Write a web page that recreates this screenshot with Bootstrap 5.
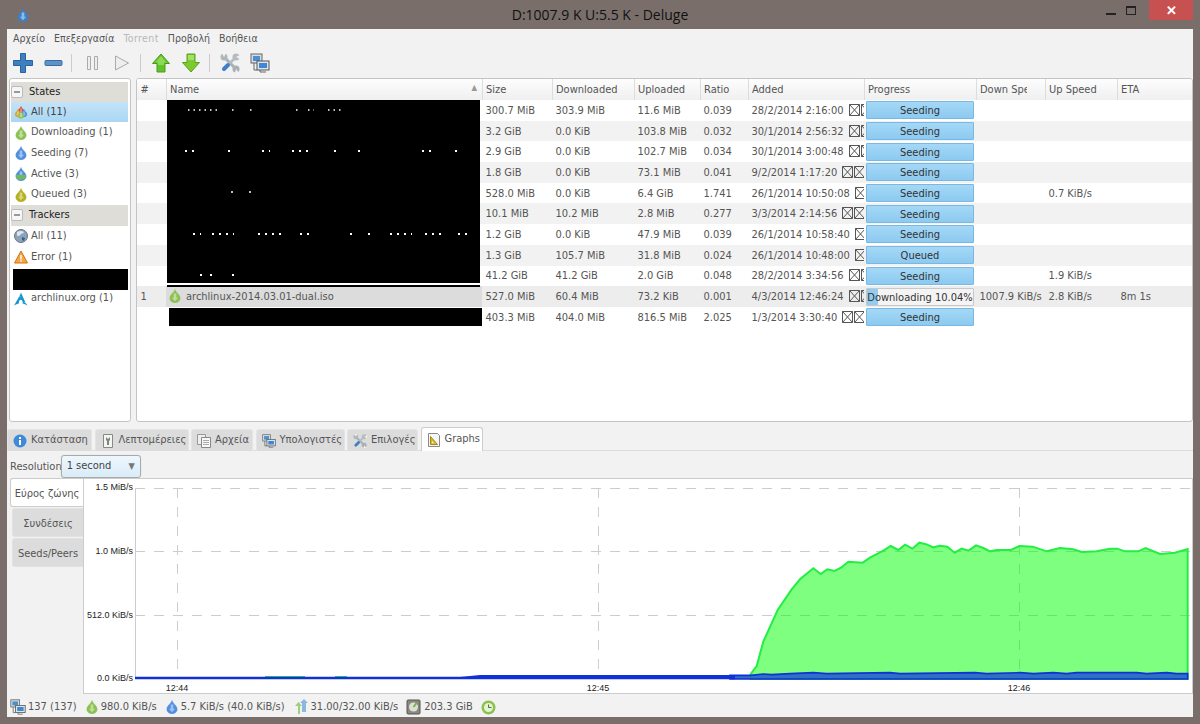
<!DOCTYPE html>
<html lang="el">
<head>
<meta charset="UTF-8">
<title>D:1007.9 K U:5.5 K - Deluge</title>
<link href="https://cdn.jsdelivr.net/npm/bootstrap@5.3.0/dist/css/bootstrap.min.css" rel="stylesheet">
<style>
body { width: 1200px; height: 724px; overflow: hidden; background: #7a6e6b; font-family: "DejaVu Sans", sans-serif; font-stretch: condensed; font-size: 11px; color: #555; padding: 0 7px 7px; }
.titlebar { height: 29px; position: relative; color: #111; font-size: 14px; font-family: "Open Sans", sans-serif; font-stretch: normal; }
.titlebar .app-icon { position: absolute; left: 9px; top: 7px; }
.win-min { width: 10px; height: 2px; background: #222; margin-top: 13px; }
.win-max { width: 10px; height: 9px; border: 1px solid #222; border-top-width: 2px; margin: 6px 0 0 10px; }
.win-close { width: 44px; height: 20px; background: #c75050; color: #fff; font-size: 13px; font-weight: 700; line-height: 20px; margin-left: 13px; }
.client { background: #f2f2f2; height: 688px; }
.menubar { height: 19px; padding: 0 6px; gap: 9px; line-height: 19px; font-size: 10.5px; }
.menubar .disabled { color: #b8b8b8; letter-spacing: .4px; }
.toolbar { height: 30px; padding: 0 6px; gap: 10px; }
.tb-sep { width: 1px; height: 18px; background: #ccc; margin-left: -2px; }
.top-pane { height: 344px; gap: 5px; padding: 0 0 0 2px; }
.side { width: 122px; background: #fff; border: 1px solid #c4c4c4; border-radius: 3px; padding: 3px 2px 0 1px; }
.side .list-group-item { border: 0; border-radius: 0; background: transparent; color: #555; padding: 0 0 0 3px; height: 20.7px; line-height: 20.7px; font-size: 11px; gap: 3px; }
.side .list-group-item.head { background: #dfddd8; color: #222; gap: 6px; padding-left: 0; }
.side .list-group-item.active { background: linear-gradient(#c3e3f8, #aad7f3); color: #444; }
.side .redact { background: #000; height: 21px; margin: 2px 0 -2px 2px; }
.head-box { width: 12px; height: 12px; border: 1px solid #bbb; border-radius: 2px; background: #f6f6f6; position: relative; }
.head-box::after { content: ""; position: absolute; left: 2px; right: 2px; top: 4px; height: 2px; background: #999; }
.torrents { flex: 1; position: relative; background: #fff; border: 1px solid #c4c4c4; border-radius: 3px; overflow: hidden; }
.torrents table { table-layout: fixed; width: 1055px; margin: 0; font-size: 11px; --bs-table-bg: transparent; --bs-table-color: #555; }
.torrents th { height: 21px; font-weight: 400; padding: 1px 3.5px 0; border-right: 1px solid #ddd; background: linear-gradient(#fdfdfd, #efefef); color: #555; white-space: nowrap; overflow: hidden; vertical-align: middle; }
.torrents td { height: 20.7px; padding: 0 3.5px; white-space: nowrap; overflow: hidden; vertical-align: middle; line-height: 17px; }
.torrents tbody tr:nth-child(even) td { background: #f2f2f2; }
.torrents tbody tr.sel td { background: #ededed; }
.torrents tbody tr.sel td.name { background: #dcdcdc; padding-left: 2px; }
.torrents td.prog { padding: 0 2px; }
.sort { float: right; color: #999; font-size: 8px; margin-right: 1px; }
.clip-head { display: inline-block; width: 47px; overflow: hidden; vertical-align: bottom; }
.x-box { margin-left: 1px; vertical-align: -2px; }
.x-box:first-of-type { margin-left: 5px; }
.progress { height: 18px; border-radius: 1px; background: #f4f4f4; border: 1px solid #c8c8c8; position: relative; --bs-progress-bar-bg: #92cdf1; }
.progress.full { border-color: #79b8e2; background: linear-gradient(#a4d8f6, #8ccaf0); }
.progress .bar-label { position: absolute; inset: 0; text-align: center; line-height: 17px; color: #333; font-size: 11px; white-space: nowrap; }
.black-a { position: absolute; left: 30px; top: 21px; width: 313px; height: 183px; display: block; }
.black-b { position: absolute; left: 30px; top: 206px; width: 313px; height: 2px; background: #000; }
.black-c { position: absolute; left: 32px; top: 229px; width: 313px; height: 18px; background: #000; }
.sash { height: 5px; }
.tabs { height: 24px; border: 0; gap: 2.5px; padding: 0; align-items: flex-end; border-bottom: 1px solid #ddd; }
.tabs .nav-link { height: 22px; padding: 0 0 0 5px; font-size: 11px; color: #555; background: #dcdcdc; border: 1px solid #e4e4e4; border-bottom: 0; border-radius: 3px 3px 0 0; gap: 4px; margin: 0; white-space: nowrap; }
.tabs .nav-link.active { height: 24px; background: #fff; border-color: #ccc; color: #555; }
.tabs .nav-item:nth-child(1) .nav-link { width: 85px; }
.tabs .nav-item:nth-child(2) .nav-link { width: 94px; }
.tabs .nav-item:nth-child(3) .nav-link { width: 62px; }
.tabs .nav-item:nth-child(4) .nav-link { width: 89px; }
.tabs .nav-item:nth-child(5) .nav-link { width: 71px; }
.tabs .nav-item:nth-child(6) .nav-link { width: 62px; }
.res-row { height: 27px; padding: 4px 0 0 3px; }
.res-btn { width: 80px; height: 23px; font-size: 11px; color: #444; padding: 0 5px; background: linear-gradient(#eef7fd, #d9ecf8); border: 1px solid #aaa; border-radius: 3px; box-shadow: 0 0 1px #9cc; margin-left: -1px; }
.res-btn .caret { color: #777; font-size: 9px; }
.graph-area { height: 216px; }
.side-tabs { width: 76px; padding-left: 3px; flex-shrink: 0; }
.side-tabs .nav-link { height: 29px; width: 71px; margin: 0 0 1px 2px; padding: 0; font-size: 11px; line-height: 29px; text-align: center; color: #555; background: #dcdcdc; border: 1px solid #e2e2e2; border-right: 0; border-radius: 3px 0 0 3px; }
.side-tabs .nav-link.active { width: 73px; margin-left: 0; background: #fff; border-color: #ccc; color: #555; }
.graph { width: 1110px; height: 216px; background: #fff; border: 1px solid #ccc; margin-left: 0; }
.graph text { font-family: "Liberation Sans", sans-serif; font-size: 9px; fill: #222; }
.statusbar { height: 23px; padding: 3px 0 0 3px; font-size: 11px; gap: 5px; white-space: nowrap; color: #555; }
.statusbar .st { gap: 2px; margin-right: 3px; }
</style>
</head>
<body class="d-flex flex-column">

<svg width="0" height="0" class="position-absolute">
  <defs>
    <symbol id="drop" viewBox="0 0 16 16">
      <path fill="currentColor" stroke="currentColor" stroke-opacity=".4" d="M8 .5C9 4 14 6.5 14 10.5a6 5.5 0 0 1-12 0C2 6.5 7 4 8 .5Z"/>
      <path fill="#fff" fill-opacity=".45" d="M6.5 5h3v5h2L8 14 4.500 10h2Z"/>
    </symbol>
    <symbol id="xbox" viewBox="0 0 11 12">
      <path fill="none" stroke="#555" d="M.5.5h10v11H.5ZM.5.5l10 11M10.500.5l-10 11"/>
    </symbol>
    <symbol id="tools" viewBox="0 0 20 20">
      <path fill="none" stroke="#a9b0b5" stroke-width="3" d="M4.500 4.500l11 11"/>
      <circle cx="4" cy="4" r="3.500" fill="#b0b7bb"/>
      <circle cx="16" cy="16" r="3.500" fill="#a9b0b5"/>
      <path fill="none" stroke="#b5bbbf" stroke-width="2.500" d="M16 4l-7 7"/>
      <circle cx="16" cy="4" r="3.500" fill="#b5bbbf"/>
      <path fill="#f2f2f2" d="M2 0h4L4 4ZM20 2v4l-4-2ZM16 16l3 4h-4Z"/>
      <path fill="none" stroke="#3f7fca" stroke-width="4" stroke-linecap="round" d="M8 12l-4 4"/>
    </symbol>
    <symbol id="hosts" viewBox="0 0 20 20">
      <rect x="1" y="1" width="11" height="9" fill="#d8dde0" stroke="#666"/>
      <rect x="3" y="3" width="7" height="5" fill="#4a8fd0"/>
      <rect x="7" y="8" width="12" height="9" fill="#dfe3e6" stroke="#555"/>
      <rect x="9" y="10" width="8" height="5" fill="#3d87d8"/>
      <path stroke="#666" fill="none" d="M4 10v7h3M10 17v2h6"/>
    </symbol>
  </defs>
</svg>

<div class="titlebar d-flex justify-content-center align-items-center">
  <svg class="app-icon" width="14" height="16"><use href="#drop" color="#3f7fc4"/></svg>
  <span>D:1007.9 K U:5.5 K - Deluge</span>
  <div class="position-absolute top-0 end-0 d-flex align-items-start">
    <div class="win-min"></div>
    <div class="win-max"></div>
    <div class="win-close text-center">✕</div>
  </div>
</div>

<div class="client d-flex flex-column">
  <div class="menubar d-flex">
    <span>Αρχείο</span><span>Επεξεργασία</span><span class="disabled">Torrent</span><span>Προβολή</span><span>Βοήθεια</span>
  </div>

  <div class="toolbar d-flex align-items-center">
    <svg width="20" height="20" viewBox="0 0 20 20"><path fill="#3d7fc0" stroke="#2a6299" d="M7.500.5h5v7h7v5h-7v7h-5v-7h-7v-5h7Z"/></svg>
    <svg width="20" height="20" viewBox="0 0 20 20"><rect x="2" y="7.500" width="17" height="5" rx="1" fill="#5d93c8" stroke="#3a6d9f"/></svg>
    <div class="tb-sep"></div>
    <svg width="20" height="20" viewBox="0 0 20 20"><path fill="#eee" stroke="#aaa" d="M5.500 3.500h3v13h-3ZM12.500 3.500h3v13h-3Z"/></svg>
    <svg width="20" height="20" viewBox="0 0 20 20"><path fill="#eee" stroke="#aaa" d="M3.500 3l13 7-13 7Z"/></svg>
    <div class="tb-sep"></div>
    <svg width="20" height="20" viewBox="0 0 20 20"><path fill="#62c22a" stroke="#4b9a1c" d="M10 1l8.500 9.500H14V19H6v-8.500H1.500Z"/><path fill="#a8e878" d="M10 3l5.500 6.500H13V12H7V9.500H4.500Z" opacity=".6"/></svg>
    <svg width="20" height="20" viewBox="0 0 20 20"><path fill="#7ccb2e" stroke="#5ba01c" d="M6 1h8v8.500h4.500L10 19l-8.500-9.500H6Z"/><path fill="#bdf08a" d="M7 2h6v5H7Z" opacity=".6"/></svg>
    <div class="tb-sep"></div>
    <svg width="20" height="20"><use href="#tools"/></svg>
    <svg width="20" height="20"><use href="#hosts"/></svg>
  </div>

  <div class="top-pane d-flex">
    <div class="side">
      <div class="list-group list-group-flush">
        <div class="list-group-item head d-flex align-items-center"><span class="head-box"></span>States</div>
        <div class="list-group-item active d-flex align-items-center">
          <svg width="14" height="14" viewBox="0 0 14 14"><use href="#drop" width="8" height="10" x="3" y="0" color="#e04a30"/><use href="#drop" width="8" height="10" x="0" y="3" color="#e0a030"/><use href="#drop" width="8" height="10" x="6" y="3" color="#4f8fe0"/><use href="#drop" width="8" height="9" x="3" y="5" color="#8cc152"/></svg>
          All (11)</div>
        <div class="list-group-item d-flex align-items-center"><svg width="14" height="14"><use href="#drop" color="#8cc152"/></svg>Downloading (1)</div>
        <div class="list-group-item d-flex align-items-center"><svg width="14" height="14"><use href="#drop" color="#4f8fe0"/></svg>Seeding (7)</div>
        <div class="list-group-item d-flex align-items-center">
          <svg width="14" height="14" viewBox="0 0 16 16"><use href="#drop" color="#4f8fe0"/><path fill="#74b85a" d="M2.200 9h11.600a6 5.500 0 0 1-11.600 2Z"/></svg>
          Active (3)</div>
        <div class="list-group-item d-flex align-items-center"><svg width="14" height="14"><use href="#drop" color="#b5b020"/></svg>Queued (3)</div>
        <div class="list-group-item head d-flex align-items-center"><span class="head-box"></span>Trackers</div>
        <div class="list-group-item d-flex align-items-center">
          <svg width="14" height="14" viewBox="0 0 14 14"><circle cx="7" cy="7" r="6.500" fill="#8fa3b8" stroke="#66788a"/><path fill="#dfe7ee" d="M3 3c2-1.500 5-1.500 7 0-1 2-2 1-3 2S5 8 3 6.500Z"/><path fill="#2f5f96" d="M8 8l3 1-1 3-2-1Z"/></svg>
          All (11)</div>
        <div class="list-group-item d-flex align-items-center">
          <svg width="14" height="14" viewBox="0 0 14 14"><path fill="#f4a640" stroke="#d2701a" d="M7 1l6.500 12H.5Z"/><path fill="#fff" d="M6.300 5h1.400v4.500H6.300ZM6.300 10.300h1.400v1.400H6.300Z"/></svg>
          Error (1)</div>
        <div class="redact"></div>
        <div class="list-group-item d-flex align-items-center">
          <svg width="14" height="14" viewBox="0 0 15 15"><path fill="#1793d1" d="M7.500.5C7 2 6.600 3 5.900 4.300c.5.500 1.100 1 2.200 1.600-1.200-.5-2-.9-2.500-1.400C4.400 6.900 2.500 10.500 0 14.500c2.100-1.300 3.800-2 5.300-2.300-.1-.3-.1-.6-.1-.9 0-1.700 1-3 2.200-2.900s1.900 1.500 1.900 3.100c0 .3 0 .5-.1.800 1.500.3 3.200 1 5.300 2.300l-1.200-2.100c-.8-.6-1.500-1.100-2.900-1.800 1 .2 1.600.5 2.200.9C11.300 8.800 10 6.400 7.500.5Z"/></svg>
          archlinux.org (1)</div>
      </div>
    </div>

    <div class="torrents">
      <table class="table table-borderless">
        <colgroup>
          <col width="29"><col width="316"><col width="70"><col width="82"><col width="66"><col width="48"><col width="116"><col width="112"><col width="69"><col width="72"><col width="75">
        </colgroup>
        <thead>
          <tr><th>#</th><th>Name<span class="sort">▲</span></th><th>Size</th><th>Downloaded</th><th>Uploaded</th><th>Ratio</th><th>Added</th><th>Progress</th><th><span class="clip-head">Down Spe</span></th><th>Up Speed</th><th>ETA</th></tr>
        </thead>
        <tbody>
          <tr><td></td><td class="name"></td><td>300.7 MiB</td><td>303.9 MiB</td><td>11.6 MiB</td><td>0.039</td><td>28/2/2014 2:16:00<svg class="x-box" width="11" height="12"><use href="#xbox"/></svg><svg class="x-box" width="11" height="12"><use href="#xbox"/></svg></td><td class="prog"><div class="progress full"><div class="bar-label">Seeding</div></div></td><td></td><td></td><td></td></tr>
          <tr><td></td><td class="name"></td><td>3.2 GiB</td><td>0.0 KiB</td><td>103.8 MiB</td><td>0.032</td><td>30/1/2014 2:56:32<svg class="x-box" width="11" height="12"><use href="#xbox"/></svg><svg class="x-box" width="11" height="12"><use href="#xbox"/></svg></td><td class="prog"><div class="progress full"><div class="bar-label">Seeding</div></div></td><td></td><td></td><td></td></tr>
          <tr><td></td><td class="name"></td><td>2.9 GiB</td><td>0.0 KiB</td><td>102.7 MiB</td><td>0.034</td><td>30/1/2014 3:00:48<svg class="x-box" width="11" height="12"><use href="#xbox"/></svg><svg class="x-box" width="11" height="12"><use href="#xbox"/></svg></td><td class="prog"><div class="progress full"><div class="bar-label">Seeding</div></div></td><td></td><td></td><td></td></tr>
          <tr><td></td><td class="name"></td><td>1.8 GiB</td><td>0.0 KiB</td><td>73.1 MiB</td><td>0.041</td><td>9/2/2014 1:17:20<svg class="x-box" width="11" height="12"><use href="#xbox"/></svg><svg class="x-box" width="11" height="12"><use href="#xbox"/></svg></td><td class="prog"><div class="progress full"><div class="bar-label">Seeding</div></div></td><td></td><td></td><td></td></tr>
          <tr><td></td><td class="name"></td><td>528.0 MiB</td><td>0.0 KiB</td><td>6.4 GiB</td><td>1.741</td><td>26/1/2014 10:50:08<svg class="x-box" width="11" height="12"><use href="#xbox"/></svg><svg class="x-box" width="11" height="12"><use href="#xbox"/></svg></td><td class="prog"><div class="progress full"><div class="bar-label">Seeding</div></div></td><td></td><td>0.7 KiB/s</td><td></td></tr>
          <tr><td></td><td class="name"></td><td>10.1 MiB</td><td>10.2 MiB</td><td>2.8 MiB</td><td>0.277</td><td>3/3/2014 2:14:56<svg class="x-box" width="11" height="12"><use href="#xbox"/></svg><svg class="x-box" width="11" height="12"><use href="#xbox"/></svg></td><td class="prog"><div class="progress full"><div class="bar-label">Seeding</div></div></td><td></td><td></td><td></td></tr>
          <tr><td></td><td class="name"></td><td>1.2 GiB</td><td>0.0 KiB</td><td>47.9 MiB</td><td>0.039</td><td>26/1/2014 10:58:40<svg class="x-box" width="11" height="12"><use href="#xbox"/></svg><svg class="x-box" width="11" height="12"><use href="#xbox"/></svg></td><td class="prog"><div class="progress full"><div class="bar-label">Seeding</div></div></td><td></td><td></td><td></td></tr>
          <tr><td></td><td class="name"></td><td>1.3 GiB</td><td>105.7 MiB</td><td>31.8 MiB</td><td>0.024</td><td>26/1/2014 10:48:00<svg class="x-box" width="11" height="12"><use href="#xbox"/></svg><svg class="x-box" width="11" height="12"><use href="#xbox"/></svg></td><td class="prog"><div class="progress full"><div class="bar-label">Queued</div></div></td><td></td><td></td><td></td></tr>
          <tr><td></td><td class="name"></td><td>41.2 GiB</td><td>41.2 GiB</td><td>2.0 GiB</td><td>0.048</td><td>28/2/2014 3:34:56<svg class="x-box" width="11" height="12"><use href="#xbox"/></svg><svg class="x-box" width="11" height="12"><use href="#xbox"/></svg></td><td class="prog"><div class="progress full"><div class="bar-label">Seeding</div></div></td><td></td><td>1.9 KiB/s</td><td></td></tr>
          <tr class="sel"><td>1</td><td class="name"><svg width="14" height="14" class="me-1 align-text-bottom"><use href="#drop" color="#8cc152"/></svg>archlinux-2014.03.01-dual.iso</td><td>527.0 MiB</td><td>60.4 MiB</td><td>73.2 KiB</td><td>0.001</td><td>4/3/2014 12:46:24<svg class="x-box" width="11" height="12"><use href="#xbox"/></svg><svg class="x-box" width="11" height="12"><use href="#xbox"/></svg></td><td class="prog"><div class="progress"><div class="progress-bar" style="width: 10.04%"></div><div class="bar-label">Downloading 10.04%</div></div></td><td>1007.9 KiB/s</td><td>2.8 KiB/s</td><td>8m 1s</td></tr>
          <tr><td></td><td class="name"></td><td>403.3 MiB</td><td>404.0 MiB</td><td>816.5 MiB</td><td>2.025</td><td>1/3/2014 3:30:40<svg class="x-box" width="11" height="12"><use href="#xbox"/></svg><svg class="x-box" width="11" height="12"><use href="#xbox"/></svg></td><td class="prog"><div class="progress full"><div class="bar-label">Seeding</div></div></td><td></td><td></td><td></td></tr>
        </tbody>
      </table>
      <!-- blacked out torrent names -->
      <svg class="black-a" viewBox="167 100 313 183">
        <rect x="167" y="100" width="313" height="183" fill="#000"/>
        <path stroke="#fff" stroke-width="1.500" stroke-dasharray="1.500 4" d="M188 110h30M232 110h3M250 110h3M296 110h2M308 110h6M328 110h14"/>
        <path stroke="#fff" stroke-width="2" stroke-dasharray="2 5" d="M185 151h14M228 151h2M262 151h8M292 151h20M334 151h2M358 151h2M422 151h12M455 151h2"/>
        <path stroke="#fff" stroke-width="1.500" stroke-dasharray="2 3" d="M231 192h3M249 192h3"/>
        <path stroke="#fff" stroke-width="2" stroke-dasharray="2 5" d="M193 234h8M212 234h22M258 234h24M300 234h14M350 234h3M368 234h2M390 234h22M425 234h18M458 234h14"/>
        <path stroke="#fff" stroke-width="2" stroke-dasharray="2 8" d="M200 275h14M232 275h2"/>
      </svg>
      <div class="black-b"></div>
      <div class="black-c"></div>
    </div>
  </div>

  <div class="sash"></div>

  <ul class="nav tabs">
    <li class="nav-item"><a class="nav-link d-flex align-items-center" href="#">
      <svg width="14" height="14" viewBox="0 0 14 14"><circle cx="7" cy="7" r="6.500" fill="#3f8ad8"/><path fill="#fff" d="M6 3h2v2H6ZM6 6h2v5H6Z"/></svg>Κατάσταση</a></li>
    <li class="nav-item"><a class="nav-link d-flex align-items-center" href="#">
      <svg width="14" height="14" viewBox="0 0 14 14"><path fill="#f4f4f4" stroke="#888" d="M2.500.5h9v13h-9Z"/><path fill="#7a8a7a" d="M5 3l2 2 2-2v3L8 7v4H6V7L5 6Z"/></svg>Λεπτομέρειες</a></li>
    <li class="nav-item"><a class="nav-link d-flex align-items-center" href="#">
      <svg width="14" height="14" viewBox="0 0 14 14"><path fill="#eee" stroke="#999" d="M.5.5h8v10h-8Z"/><path fill="#f8f8f8" stroke="#888" d="M4.500 3.500h9v10h-9Z"/><path stroke="#aaa" d="M6 6.500h6M6 8.500h6M6 10.500h6"/></svg>Αρχεία</a></li>
    <li class="nav-item"><a class="nav-link d-flex align-items-center" href="#"><svg width="14" height="14"><use href="#hosts"/></svg>Υπολογιστές</a></li>
    <li class="nav-item"><a class="nav-link d-flex align-items-center" href="#"><svg width="14" height="14"><use href="#tools"/></svg>Επιλογές</a></li>
    <li class="nav-item"><a class="nav-link active d-flex align-items-center" href="#">
      <svg width="14" height="14" viewBox="0 0 14 14"><path fill="#f6f6f6" stroke="#888" d="M1.500.5h9l2 2v11h-11Z"/><path fill="#d9b92c" stroke="#a88a10" d="M3.500 3.500l7 8h-7Z"/><path fill="#f6f6f6" d="M5 8l2 2.300H5Z"/></svg>Graphs</a></li>
  </ul>

  <div class="res-row d-flex align-items-start">
    <span class="pt-1">Resolution</span>
    <div class="res-btn btn d-flex justify-content-between align-items-center"><span>1 second</span><span class="caret">▼</span></div>
  </div>

  <div class="graph-area d-flex">
    <div class="side-tabs nav flex-column">
      <a class="nav-link active" href="#">Εύρος ζώνης</a>
      <a class="nav-link" href="#">Συνδέσεις</a>
      <a class="nav-link" href="#">Seeds/Peers</a>
    </div>
    <svg class="graph" viewBox="84 479 1108 214">
      <path stroke="#ccc" d="M135.500 488v190"/>
      <path stroke="#ccc" stroke-dasharray="10 9" d="M135 488.500h1055M135 551.500h1055M135 615.500h1055M177.500 488v190M598.500 488v190M1019.500 488v190"/>
      <g transform="translate(730 530) scale(.33333)">
        <path fill="#00ff00" fill-opacity=".5" stroke="#22ee44" stroke-width="6" d="M62 432L80 408 100 335 143 240 185 178 210 148 250 115 272 132 292 118 314 123 333 113 355 95 398 98 420 83 460 62 482 48 505 60 525 44 547 56 568 38 590 43 610 52 630 47 652 50 674 68 695 56 716 62 738 46 760 54 780 64 800 60 843 60 868 48 908 50 950 64 990 54 1030 58 1055 66 1100 64 1140 56 1162 56 1185 64 1225 64 1247 54 1290 72 1335 68 1373 57V447H62Z"/>
        <path fill="#2f6fc4" stroke="#1030d8" stroke-width="5" d="M0 436H62L100 432 125 434 180 431 250 428 290 431 480 428 510 431 735 428 770 431 870 428 910 431 970 428 1010 431 1040 428 1220 428 1250 431 1310 428 1340 431H1373V447H0Z"/>
      </g>
      <path stroke="#30e050" d="M265 676.500h40M335 676.500h12M530 676.500h12"/>
      <path stroke="#1030d8" stroke-width="2.500" d="M135 678h600"/>
      <path fill="#1030d8" d="M460 677l20-2h255v4H460Z"/>
      <text x="133" y="490" text-anchor="end">1.5 MiB/s</text>
      <text x="133" y="554" text-anchor="end">1.0 MiB/s</text>
      <text x="133" y="618" text-anchor="end">512.0 KiB/s</text>
      <text x="133" y="681" text-anchor="end">0.0 KiB/s</text>
      <text x="177" y="691" text-anchor="middle">12:44</text>
      <text x="598" y="691" text-anchor="middle">12:45</text>
      <text x="1019" y="691" text-anchor="middle">12:46</text>
    </svg>
  </div>

  <div class="statusbar d-flex align-items-center">
    <span class="st d-flex align-items-center"><svg width="16" height="16"><use href="#hosts"/></svg>137 (137)</span>
    <span class="st d-flex align-items-center"><svg width="14" height="14"><use href="#drop" color="#8cc152"/></svg>980.0 KiB/s</span>
    <span class="st d-flex align-items-center"><svg width="14" height="14"><use href="#drop" color="#4f8fe0"/></svg>5.7 KiB/s (40.0 KiB/s)</span>
    <span class="st d-flex align-items-center"><svg width="16" height="16" viewBox="0 0 14 16"><path fill="#9ccf80" d="M4 15V7H1l3.500-4L8 7H6v8Z"/><path fill="#8cb8e0" d="M8 13V4H6l4-4 4 4h-2v9Z"/></svg>31.00/32.00 KiB/s</span>
    <span class="st d-flex align-items-center"><svg width="16" height="16" viewBox="0 0 16 16"><rect x="1" y="1" width="13" height="14" rx="1" fill="#8a8a7c" stroke="#555"/><circle cx="7.500" cy="8" r="4.500" fill="#ddd"/><path stroke="#7bb83a" stroke-width="2" d="M7.500 8l3-4"/></svg>203.3 GiB</span>
    <svg width="15" height="15" viewBox="0 0 15 15"><circle cx="7.500" cy="7.500" r="7" fill="#8cc152"/><circle cx="7.500" cy="7.500" r="4.500" fill="#e6f2d4"/><path stroke="#4a7a20" fill="none" d="M7.500 4.500v3h3"/></svg>
  </div>
</div>

</body>
</html>
